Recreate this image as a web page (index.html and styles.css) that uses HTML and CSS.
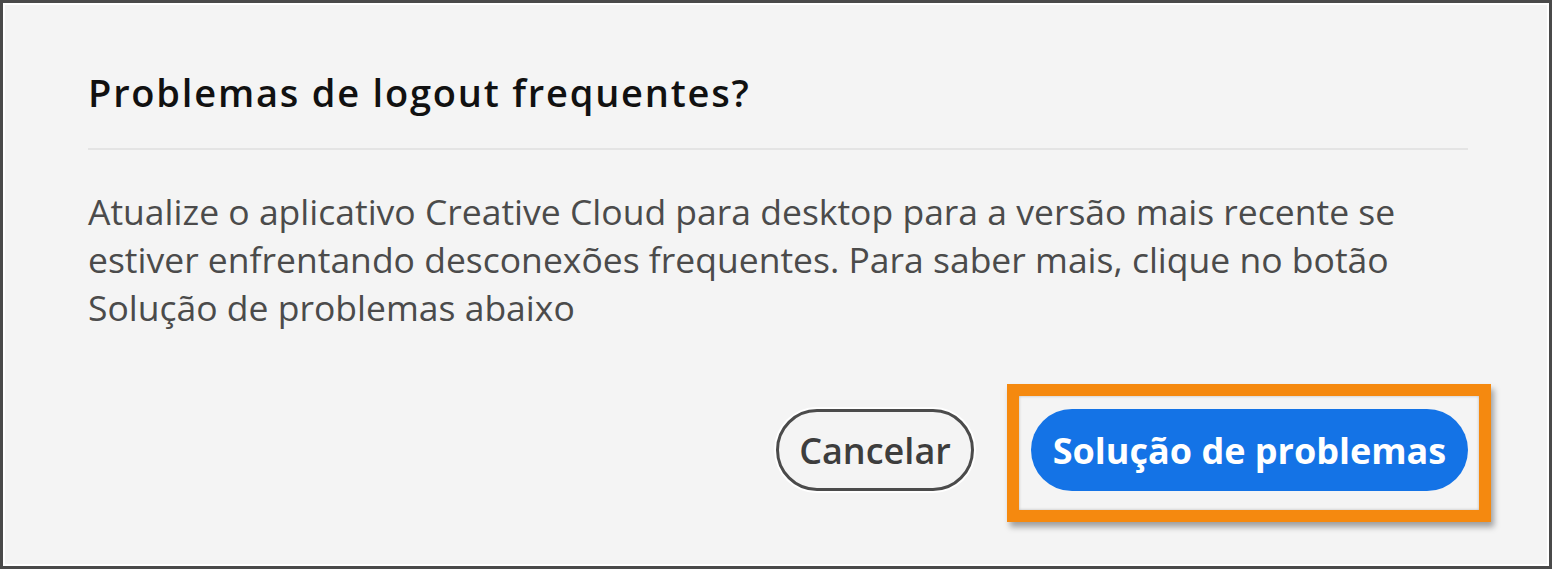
FILE: index.html
```html
<!DOCTYPE html>
<html lang="pt">
<head>
    <meta charset="UTF-8">
    <meta name="viewport" content="width=device-width, initial-scale=1.0">
    <title>Problemas de logout frequentes?</title>
    <link rel="stylesheet" href="styles.css">
</head>
<body>
    <div class="frame">
        <div class="dialog">
            <h1 class="title">Problemas de logout frequentes?</h1>
            <hr class="divider">
            <p class="message">Atualize o aplicativo Creative Cloud para desktop para a versão mais recente se<br>
                estiver enfrentando desconexões frequentes. Para saber mais, clique no botão<br>
                Solução de problemas abaixo</p>
            <div class="actions">
                <button class="btn btn-secondary">Cancelar</button>
                <span class="highlight">
                    <button class="btn btn-primary">Solução de problemas</button>
                </span>
            </div>
        </div>
    </div>
</body>
</html>
```

FILE: styles.css
```css
* {
    box-sizing: border-box;
}

html, body {
    height: 100%;
}

body {
    margin: 0;
    font-family: "Open Sans", "Liberation Sans", sans-serif;
    background: #f4f4f4;
}

.frame {
    height: 100vh;
    border: 3px solid #4a4a4a;
    box-shadow: inset 0 0 0 2px #ffffff;
    background: #f4f4f4;
}

.dialog {
    padding: 67px 81px 0 85px;
}

.title {
    margin: 0;
    font-size: 38px;
    line-height: 44px;
    letter-spacing: 1.8px;
    font-weight: 600;
    color: #111111;
}

.divider {
    margin: 34px 0 0;
    border: none;
    height: 2px;
    background: #e4e4e4;
}

.message {
    margin: 37px 0 0;
    font-size: 35.5px;
    line-height: 48px;
    white-space: nowrap;
    color: #4b4b4b;
}

.actions {
    display: flex;
    justify-content: flex-end;
    align-items: center;
    gap: 57px;
    margin-top: 78px;
}

.btn {
    height: 82px;
    border-radius: 41px;
    font-family: inherit;
    font-size: 36px;
    cursor: pointer;
}

.btn-secondary {
    width: 198px;
    padding: 0;
    background: #f4f4f4;
    border: 3px solid #4b4b4b;
    box-shadow: 0 0 0 2px #ffffff;
    color: #3d3d3d;
    font-weight: 600;
}

.btn-primary {
    width: 437px;
    padding: 0;
    background: #1473e6;
    border: none;
    color: #ffffff;
    font-weight: 700;
}

.highlight {
    display: block;
    margin: -25px -23px -31px -24px;
    padding: 13px 11px 19px 12px;
    border: 12px solid #f5890f;
    box-shadow: 3px 5px 6px rgba(0, 0, 0, 0.35), inset 0 0 3px rgba(0, 0, 0, 0.25);
}
```
